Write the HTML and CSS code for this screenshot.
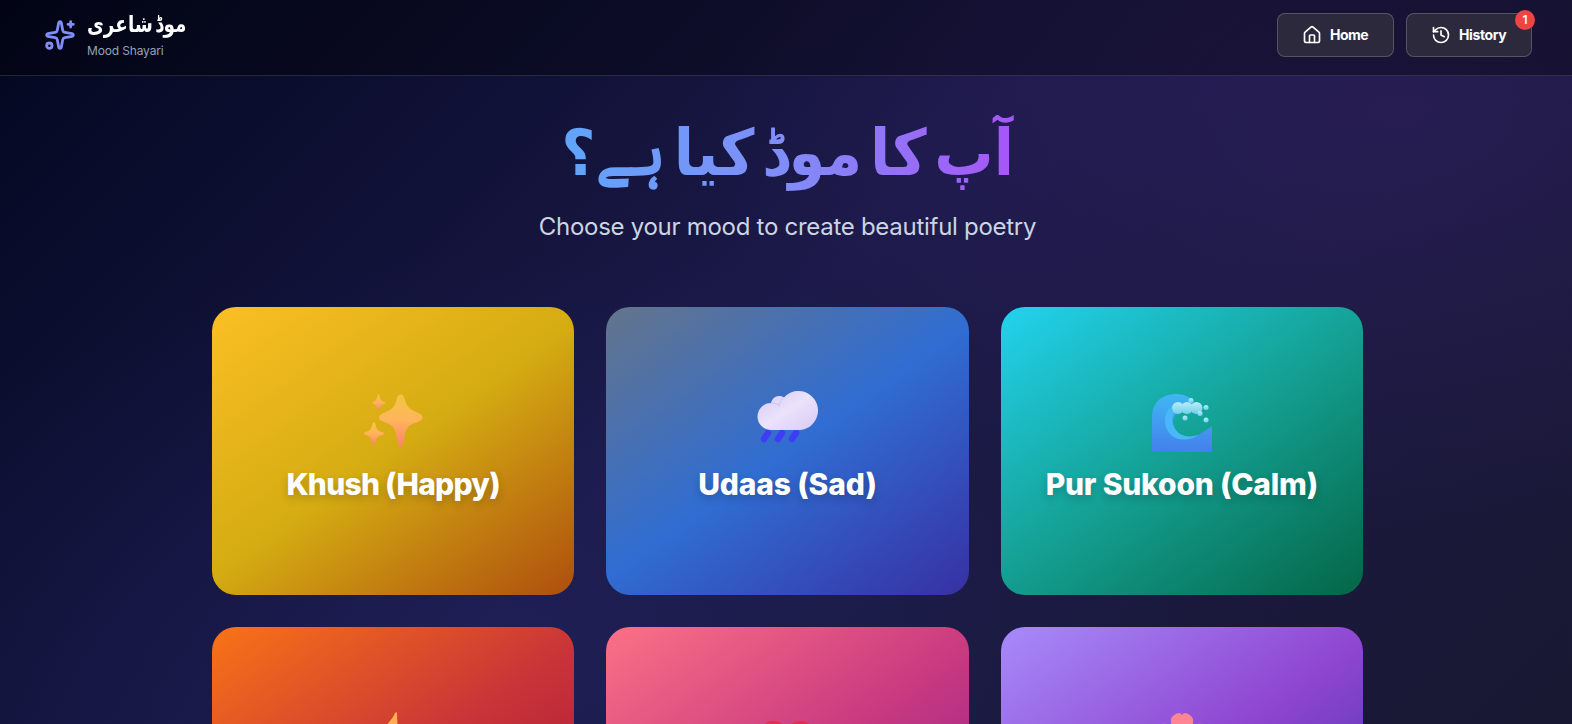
FILE: index.html
```html
<!DOCTYPE html>
<html lang="en">
<head>
<meta charset="utf-8">
<title>Mood Shayari</title>
<link rel="stylesheet" href="styles.css">
</head>
<body>
<header class="topbar">
  <div class="brand">
    <svg class="brand-icon" viewBox="0 0 24 24"><path d="M11.017 2.814a1 1 0 0 1 1.966 0l1.051 5.558a2 2 0 0 0 1.594 1.594l5.558 1.051a1 1 0 0 1 0 1.966l-5.558 1.051a2 2 0 0 0-1.594 1.594l-1.051 5.558a1 1 0 0 1-1.966 0l-1.051-5.558a2 2 0 0 0-1.594-1.594l-5.558-1.051a1 1 0 0 1 0-1.966l5.558-1.051a2 2 0 0 0 1.594-1.594z"/><path d="M20 2v4M22 4h-4"/><circle cx="4" cy="20" r="2"/></svg>
    <div class="brand-text">
      <div class="brand-name" lang="ur" dir="rtl">موڈ شاعری</div>
      <div class="brand-sub">Mood Shayari</div>
    </div>
  </div>
  <nav class="nav">
    <a class="nav-button"><svg class="nav-icon" viewBox="0 0 24 24"><path d="M15 21v-8a1 1 0 0 0-1-1h-4a1 1 0 0 0-1 1v8"/><path d="M3 10a2 2 0 0 1 .709-1.528l7-5.999a2 2 0 0 1 2.582 0l7 5.999A2 2 0 0 1 21 10v9a2 2 0 0 1-2 2H5a2 2 0 0 1-2-2z"/></svg><span class="home-label">Home</span></a>
    <a class="nav-button"><svg class="nav-icon" viewBox="0 0 24 24"><path d="M3 12a9 9 0 1 0 9-9 9.75 9.75 0 0 0-6.74 2.74L3 8"/><path d="M3 3v5h5M12 7v5l4 2"/></svg><span class="history-label">History</span><b class="badge">1</b></a>
  </nav>
</header>
<main class="main">
  <h1 class="title" lang="ur" dir="rtl"><span class="title-text">آپ کا موڈ کیا ہے؟</span></h1>
  <p class="subtitle">Choose your mood to create beautiful poetry</p>
  <section class="moods">
    <article class="card happy">
      <svg class="emoji" viewBox="0 0 60 60">
        <defs><linearGradient id="gold" x2="0" y2="1"><stop stop-color="#f5c443"/><stop offset=".5" stop-color="#ffb45b"/><stop offset="1" stop-color="#ff8271"/></linearGradient></defs>
        <g fill="url(#gold)"><path d="M38 3.500c2 0 2.800 2 3.600 4.500 2 7 4.400 9.500 9.400 12C56 22.500 59.500 23.500 59.500 26.500s-4 4-9 6c-5.800 2.500-7.400 5-8.900 12.500-.9 5-2 10.500-3.900 10.500s-3.200-5.500-4.100-10.500c-1.500-7.500-3.600-10-8.600-12.500C20 30.500 16 29.500 16 26.500s4-4 9-6.500c5-2.500 6.900-5 8.600-12 .6-2.500 2.400-4.500 4.400-4.500z"/><path d="M15.500 3c1 0 1.300 4.500 2.500 6S22.500 11 22.500 12s-3.300 1.200-4.500 2.700-1.500 4.800-2.500 4.800-1.300-3.300-2.500-4.800S9.500 13 9.500 12s2.300-1.500 3.500-3S14.500 3 15.500 3z"/><path d="M11 31c1.500 0 1.700 5 3.300 7.500S21 41 21 42.500s-5 2-6.700 4S12.300 54 10.700 54s-1.700-5.500-3.400-7.500S1 44 1 42.500s4.700-2 6.300-4S9.500 31 11 31z"/></g>
      </svg>
      <h2 class="card-title t-happy">Khush (Happy)</h2>
    </article>
    <article class="card sad">
      <svg class="emoji" viewBox="0 0 60 60">
        <defs><linearGradient id="puff" x1="0" y1="0" x2="1" y2="1"><stop stop-color="#d3caf6"/><stop offset=".5" stop-color="#ebe2fb"/><stop offset="1" stop-color="#d8caf6"/></linearGradient></defs>
        <g stroke="#3e3cf5" stroke-width="6.500" stroke-linecap="round"><path d="M11 42l-4 6M25 42l-4 6M39 42l-4 6"/></g>
        <path fill="url(#puff)" d="M14 39a13.500 13.500 0 0 1 0-27c1-4 4-7 8-7 2 0 4 .5 5 1.500A19.500 19.500 0 1 1 40 39z"/><path d="M14 12c3 0 6 1 8 2M27 6c-3 3-5 6-5 10" fill="none" stroke="#bfb4ed" stroke-opacity=".6"/>
      </svg>
      <h2 class="card-title t-sad">Udaas (Sad)</h2>
    </article>
    <article class="card calm">
      <svg class="emoji" viewBox="0 0 60 60">
        <defs><linearGradient id="sea" x2="0" y2="1"><stop stop-color="#40b7f2"/><stop offset="1" stop-color="#4480ed"/></linearGradient><linearGradient id="foam" x2="0" y2="1"><stop stop-color="#b7edf5"/><stop offset="1" stop-color="#70d0ee"/></linearGradient></defs>
        <path fill="url(#sea)" d="M0 61V27C0 11 10 3 25 3c7 0 13 3 17 8L30 20c-9 3-11 10-8 17 4 8 12 11 21 8 6-2 11-6 17-10v26z"/><path fill="#48b8f8" d="M22 14c-6 3-9 9-9 15 0 12 8 19.500 18 19.500 7 0 12-2 16-5-12 5-22 0-25-8-3-7-2-13 4-18z"/><g fill="url(#foam)"><circle cx="26" cy="17" r="6"/><circle cx="35" cy="17" r="6"/><circle cx="44.500" cy="17" r="6"/><circle cx="39" cy="9.500" r="2.500"/><circle cx="54" cy="16.500" r="2.500"/><circle cx="48" cy="22.500" r="2.500"/><circle cx="33" cy="27" r="2.500"/><circle cx="54" cy="29" r="2.500"/></g>
      </svg>
      <h2 class="card-title t-calm">Pur Sukoon (Calm)</h2>
    </article>
    <article class="card angry">
      <svg class="emoji" viewBox="0 0 60 60"><path fill="#ffae50" d="M32 2C28 12 16 18 14 33c-3 16 7 26 18 26 14 0 21-13 16-26-2-6-7-9-8-15-3 4-2 7-4 10C35 19 34 10 34 1z"/></svg>
    </article>
    <article class="card love">
      <svg class="emoji" viewBox="0 0 60 60"><path fill="#e62d4d" d="M30 57C14 47 4 34 4 23c0-8 5-13 12-13 6 0 11 3 14 8 3-5 8-8 14-8 7 0 12 5 12 13 0 11-10 24-26 34z"/></svg>
    </article>
    <article class="card hope">
      <svg class="emoji" viewBox="0 0 60 60"><g fill="#ff8494"><path id="petal" d="M30 30C22 22 18 14 19 8c1-3 5-6 9-6l2 2 2-2c4 0 8 3 9 6 1 6-3 14-11 22z"/><use href="#petal" transform="rotate(72 30 30)"/><use href="#petal" transform="rotate(144 30 30)"/><use href="#petal" transform="rotate(216 30 30)"/><use href="#petal" transform="rotate(288 30 30)"/></g></svg>
    </article>
  </section>
</main>
</body>
</html>
```
FILE: styles.css
```css
* { box-sizing: border-box; }
body {
  margin: 0; height: 724px; overflow: hidden;
  font-family: Inter, "Liberation Sans", sans-serif; color: #fff;
  background:
    radial-gradient(ellipse 700px 420px at 1400px 110px, rgba(70, 38, 125, .28), transparent),
    radial-gradient(ellipse 700px 400px at 520px 650px, rgba(35, 45, 120, .25), transparent),
    linear-gradient(135deg, #030720 0%, #1c1a4a 48%, #181832 100%);
}
.topbar {
  height: 76px; padding: 13px 40px 0 44px; display: flex; justify-content: space-between; align-items: flex-start;
  background: rgba(0, 0, 0, .33); border-bottom: 1px solid rgba(255, 255, 255, .12);
}
.brand { display: flex; gap: 11px; align-items: flex-start; }
.brand-icon { width: 32px; height: 32px; margin-top: 6px; fill: none; stroke: #818cf8; stroke-width: 2.100; stroke-linecap: round; stroke-linejoin: round; }
.brand-text { margin-top: -5px; display: flex; flex-direction: column; align-items: flex-start; }
.brand-name { font: bold 23px/32px "DejaVu Sans", sans-serif; white-space: nowrap; word-spacing: -5px; transform: scaleX(.8); transform-origin: left; }
.brand-sub { font-size: 12px; line-height: 16px; margin-top: 3px; letter-spacing: -.15px; color: #94a3b8; }
.nav { display: flex; gap: 12px; }
.nav-button {
  position: relative; height: 44px; padding: 0 24px; display: flex; align-items: center; gap: 8px;
  border: 1px solid rgba(255, 255, 255, .2); border-radius: 8px; background: #2c293d;
  font-size: 14px; font-weight: 700;
}
.nav-icon { width: 20px; height: 20px; fill: none; stroke: #fff; stroke-width: 2; stroke-linecap: round; stroke-linejoin: round; }
.home-label { width: 39px; letter-spacing: -.5px; line-height: 20px; padding-bottom: 1px; }
.history-label { width: 48px; letter-spacing: -.4px; line-height: 20px; padding-bottom: 1px; }
.badge {
  position: absolute; top: -4px; right: -4px; width: 20px; height: 20px; border-radius: 50%;
  background: #ef4444; font-size: 12px; font-weight: 600; line-height: 20px; text-align: center;
}
.main { padding: 47px 209px 0 212px; text-align: center; }
.title { margin: 0; font: bold 64px/60px "DejaVu Sans", sans-serif; height: 72px; display: flex; justify-content: center; }
.title-text {
  height: 80px; margin-top: -8px; padding: 8px 0 12px; white-space: nowrap; word-spacing: -14px; color: transparent; transform: scaleX(.925);
  background: linear-gradient(90deg, #60a5fa, #818cf8 50%, #a855f7); -webkit-background-clip: text; background-clip: text;
}
.subtitle { margin: 16px 0 64px; font-size: 24px; line-height: 32px; letter-spacing: -.28px; color: #cbd5e1; }
.moods { display: grid; grid-template-columns: repeat(3, 1fr); gap: 32px; }
.card { height: 288px; border-radius: 24px; padding-top: 84px; display: flex; flex-direction: column; align-items: center; }
.emoji { width: 60px; height: 60px; overflow: visible; }
.card-title { margin: 15px 0 0; font-size: 30px; line-height: 36px; font-weight: 800; white-space: nowrap; text-shadow: 0 4px 8px rgba(0, 0, 0, .2); }
.t-happy { letter-spacing: -.75px; }
.t-sad { letter-spacing: -.15px; }
.t-calm { letter-spacing: -.2px; }
.happy { background: linear-gradient(145deg, #fbbf24, #d4ac12 50%, #ae4e0e); }
.sad { background: linear-gradient(145deg, #64748b, #306dd2 50%, #3730a3); }
.calm { background: linear-gradient(145deg, #22d3ee, #14a093 50%, #046647); }
.angry { background: linear-gradient(145deg, #f97316, #c93438 50%, #9f1239); }
.love { background: linear-gradient(145deg, #fb7185, #c93a80 50%, #86198f); }
.hope { background: linear-gradient(145deg, #a78bfa, #8e45d0 50%, #3730a3); }
```
